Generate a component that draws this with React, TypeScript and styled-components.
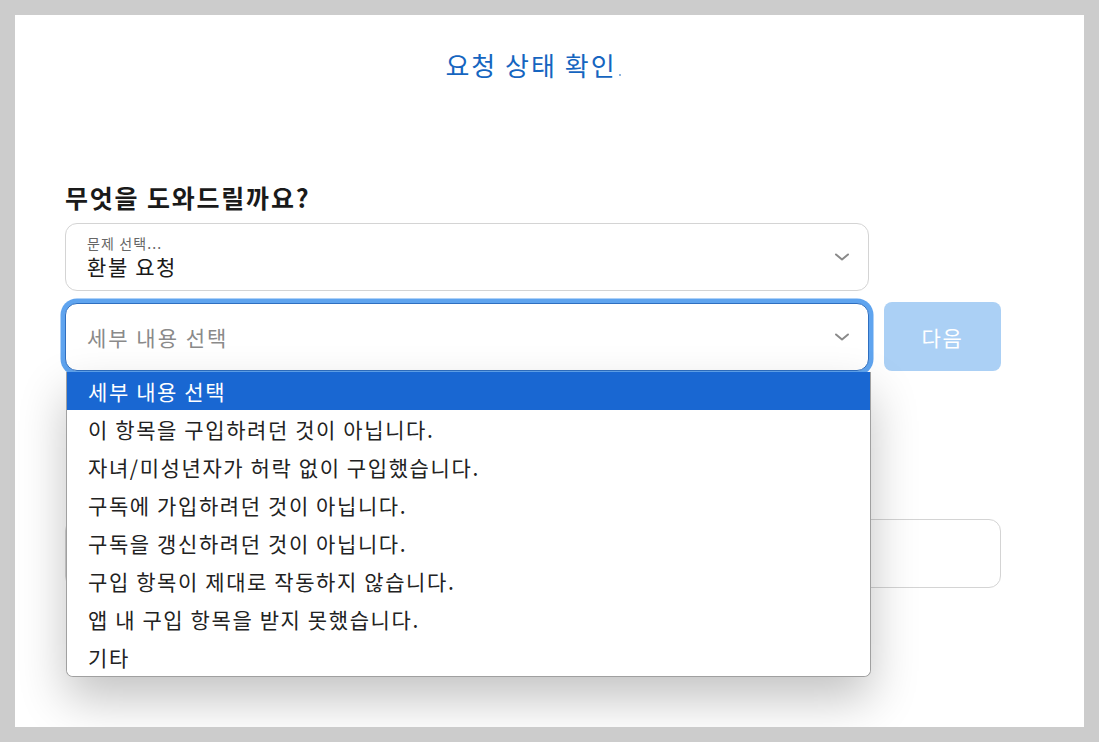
import React from 'react'
import styled, { createGlobalStyle } from 'styled-components'

const GlobalStyle = createGlobalStyle`
  html, body {
    margin: 0;
    padding: 0;
    background: #cccccc;
  }
  body {
    font-family: "Noto Sans CJK KR", "Noto Sans", sans-serif;
    color: #222;
  }
`

const Page = styled.div`
  padding: 15px;
  height: 742px;
  box-sizing: border-box;
`

const Panel = styled.div`
  background: #fff;
  height: 712px;
  padding: 0 83px 0 50px;
  box-sizing: border-box;
  overflow: hidden;
`

const Title = styled.h1`
  margin: 0;
  padding-top: 32px;
  text-align: center;
  font-size: 26px;
  font-weight: 400;
  letter-spacing: 2px;
  color: #1565c0;
  line-height: 36px;
  &::after {
    content: '';
    display: inline-block;
    width: 2px;
    height: 2px;
    margin-left: 2px;
    background: #8fb6e0;
    vertical-align: baseline;
  }
`

const Heading = styled.h2`
  margin: 97px 0 0;
  font-size: 25px;
  font-weight: 700;
  letter-spacing: 1.8px;
  color: #1a1a1a;
  line-height: 34px;
`

const Form = styled.div`
  margin-top: 9px;
  display: grid;
  grid-template-columns: 804px 117px;
  column-gap: 15px;
  row-gap: 12px;
`

const SelectBox = styled.div<{ $focused?: boolean }>`
  position: relative;
  height: 68px;
  box-sizing: border-box;
  border: ${p => (p.$focused ? '1.5px solid #2f6fc0' : '1px solid #d4d4d4')};
  border-radius: 12px;
  background: #fff;
  padding: 0 50px 0 21px;
  display: flex;
  flex-direction: column;
  justify-content: center;
  box-shadow: ${p => (p.$focused ? '0 0 0 4.5px #5fa4ef' : 'none')};
`

const FieldLabel = styled.span`
  font-size: 14px;
  letter-spacing: 1.1px;
  color: #666;
  line-height: 18px;
`

const FieldValue = styled.span<{ $placeholder?: boolean }>`
  font-size: 21px;
  letter-spacing: ${p => (p.$placeholder ? '2px' : '1.6px')};
  color: ${p => (p.$placeholder ? '#8a8a8a' : '#1a1a1a')};
  line-height: 28px;
`

const Chevron = styled.svg`
  position: absolute;
  right: 18px;
  top: 50%;
  margin-top: -5px;
  width: 16px;
  height: 10px;
`

const NextButton = styled.button`
  height: 69px;
  margin-top: -1px;
  border: none;
  border-radius: 8px;
  background: #abd0f5;
  color: #fff;
  font-family: inherit;
  font-size: 21px;
  letter-spacing: 1.6px;
`

const Options = styled.ul`
  position: absolute;
  left: 0;
  top: 68px;
  width: 803px;
  margin: 0;
  padding: 0;
  list-style: none;
  background: #fff;
  border: 1px solid #a0a0a0;
  border-top: none;
  border-radius: 0 0 7px 7px;
  box-shadow: 0 22px 48px rgba(0, 0, 0, 0.24);
  overflow: hidden;
  z-index: 2;
`

const Option = styled.li<{ $active?: boolean }>`
  height: 38px;
  padding-left: 21px;
  display: flex;
  align-items: center;
  font-size: 21px;
  letter-spacing: 1.6px;
  background: ${p => (p.$active ? '#1967d2' : '#fff')};
  color: ${p => (p.$active ? '#fff' : '#222')};
`

const TextField = styled.div`
  grid-column: 1 / 3;
  margin-top: 136px;
  height: 69px;
  box-sizing: border-box;
  border: 1px solid #d4d4d4;
  border-radius: 12px;
`

const options = [
  '세부 내용 선택',
  '이 항목을 구입하려던 것이 아닙니다.',
  '자녀/미성년자가 허락 없이 구입했습니다.',
  '구독에 가입하려던 것이 아닙니다.',
  '구독을 갱신하려던 것이 아닙니다.',
  '구입 항목이 제대로 작동하지 않습니다.',
  '앱 내 구입 항목을 받지 못했습니다.',
  '기타',
]

function ChevronIcon() {
  return (
    <Chevron viewBox="0 0 16 10">
      <path d="M2 2.5 L8 7.5 L14 2.5" fill="none" stroke="#8a8a8a" strokeWidth="2" strokeLinecap="round" strokeLinejoin="round" />
    </Chevron>
  )
}

export default function App() {
  return (
    <Page>
      <GlobalStyle />
      <Panel>
        <Title>요청 상태 확인</Title>
        <Heading>무엇을 도와드릴까요?</Heading>
        <Form>
          <SelectBox>
            <FieldLabel>문제 선택...</FieldLabel>
            <FieldValue>환불 요청</FieldValue>
            <ChevronIcon />
          </SelectBox>
          <div />
          <SelectBox $focused>
            <FieldValue $placeholder>세부 내용 선택</FieldValue>
            <ChevronIcon />
            <Options>
              {options.map((o, i) => (
                <Option key={o} $active={i === 0}>{o}</Option>
              ))}
            </Options>
          </SelectBox>
          <NextButton>다음</NextButton>
          <TextField />
        </Form>
      </Panel>
    </Page>
  )
}
